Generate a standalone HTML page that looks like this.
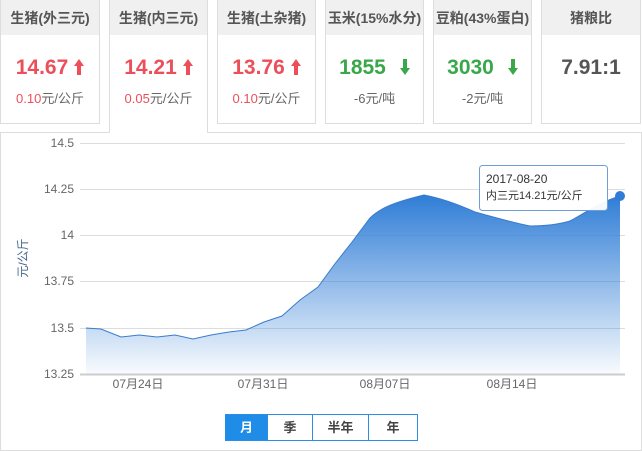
<!DOCTYPE html>
<html><head><meta charset="utf-8"><style>
body{margin:0;width:642px;height:451px;background:#fff;font-family:"Liberation Sans","Noto Sans CJK SC",sans-serif;position:relative;overflow:hidden}
.card{position:absolute;top:0;height:124px;border:1px solid #ddd;border-top:none;box-sizing:border-box;text-align:center;background:#fff}
.card .h{height:35px;background:#f0f0f0;line-height:36px;font-size:14px;font-weight:bold;color:#555}
.card .v{margin-top:18px;font-size:21px;font-weight:bold;height:30px;line-height:30px}
.card .s{font-size:13px;margin-top:5px;color:#666}
.card svg{vertical-align:-1px;margin-left:6px}
.r{color:#ec4f5a}.g{color:#3aa84a}
.active{height:133px;border-bottom:none;z-index:2}
.panel{position:absolute;left:0;top:132px;width:642px;height:319px;border:1px solid #ddd;box-sizing:border-box}
.btns{position:absolute;left:225px;top:414px;display:flex;height:27px;font-size:13px;font-weight:bold;color:#444}
.btns div{border:1px solid #2b8ee4;border-left:none;line-height:25px;text-align:center;box-sizing:border-box}
</style></head><body>
<div class="card" style="left:0;width:100px"><div class="h">生猪(外三元)</div><div class="v r">14.67<svg width="10" height="16" viewBox="0 0 10 16"><path d="M5 0 L10 7 L7 7 L7 16 L3 16 L3 7 L0 7 Z" fill="#ec4f5a"/></svg></div><div class="s"><span class="r">0.10</span>元/公斤</div></div>
<div class="card active" style="left:109px;width:99px"><div class="h">生猪(内三元)</div><div class="v r">14.21<svg width="10" height="16" viewBox="0 0 10 16"><path d="M5 0 L10 7 L7 7 L7 16 L3 16 L3 7 L0 7 Z" fill="#ec4f5a"/></svg></div><div class="s"><span class="r">0.05</span>元/公斤</div></div>
<div class="card" style="left:217px;width:99px"><div class="h">生猪(土杂猪)</div><div class="v r">13.76<svg width="10" height="16" viewBox="0 0 10 16"><path d="M5 0 L10 7 L7 7 L7 16 L3 16 L3 7 L0 7 Z" fill="#ec4f5a"/></svg></div><div class="s"><span class="r">0.10</span>元/公斤</div></div>
<div class="card" style="left:325px;width:99px"><div class="h">玉米(15%水分)</div><div class="v g">1855<svg width="10" height="16" viewBox="0 0 10 16" style="margin-left:14px"><path d="M5 16 L10 9 L7 9 L7 0 L3 0 L3 9 L0 9 Z" fill="#3aa84a"/></svg></div><div class="s">-6元/吨</div></div>
<div class="card" style="left:433px;width:99px"><div class="h">豆粕(43%蛋白)</div><div class="v g">3030<svg width="10" height="16" viewBox="0 0 10 16" style="margin-left:14px"><path d="M5 16 L10 9 L7 9 L7 0 L3 0 L3 9 L0 9 Z" fill="#3aa84a"/></svg></div><div class="s">-2元/吨</div></div>
<div class="card" style="left:541px;width:100px"><div class="h">猪粮比</div><div class="v" style="color:#555">7.91:1</div></div>
<div class="panel"></div>
<svg style="position:absolute;left:0;top:0" width="642" height="451">
<defs><linearGradient id="gr" x1="0" y1="0" x2="0" y2="1"><stop offset="0" stop-color="#2f7dd6"/><stop offset="1" stop-color="#2f7dd6" stop-opacity="0.03"/></linearGradient></defs>
<g stroke="#ddd" stroke-width="1">
<line x1="80" y1="143.5" x2="625" y2="143.5"/><line x1="80" y1="189.5" x2="625" y2="189.5"/><line x1="80" y1="235.5" x2="625" y2="235.5"/><line x1="80" y1="281.5" x2="625" y2="281.5"/><line x1="80" y1="328.5" x2="625" y2="328.5"/></g>
<path d="M86,328 L101,329 L121,337 L139,335 L157,337 L175,335 L193,339 L211,335 L229,332 L246,330 L264,322 L282,316 L300,300 L318,287 L334,265 L352,242 L370,218 C380,208 395,202 424,195 C440,198 455,203 475,212 C490,216 510,222 530,226 C545,226 560,224 570,221 C585,213 600,202 620,196 L620,374 L86,374 Z" fill="url(#gr)" stroke="none"/>
<path d="M86,328 L101,329 L121,337 L139,335 L157,337 L175,335 L193,339 L211,335 L229,332 L246,330 L264,322 L282,316 L300,300 L318,287 L334,265 L352,242 L370,218 C380,208 395,202 424,195 C440,198 455,203 475,212 C490,216 510,222 530,226 C545,226 560,224 570,221 C585,213 600,202 620,196" fill="none" stroke="#3a7ccc" stroke-width="1"/>
<line x1="80" y1="374.5" x2="625" y2="374.5" stroke="#ccc" stroke-width="2"/>
<circle cx="620" cy="196" r="5" fill="#2f7dd6"/>
<rect x="479.5" y="165.5" width="128" height="45" rx="3" fill="#fff" fill-opacity="0.95" stroke="#6e9ed8"/>
<g font-family="Liberation Sans,Noto Sans CJK SC,sans-serif" font-size="12" fill="#666">
<text x="486" y="183" font-size="12" fill="#333">2017-08-20</text>
<text x="486" y="199" fill="#333" font-size="11">内三元14.21元/公斤</text>
<text x="74" y="147" text-anchor="end">14.5</text><text x="74" y="193" text-anchor="end">14.25</text><text x="74" y="239" text-anchor="end">14</text><text x="74" y="285" text-anchor="end">13.75</text><text x="74" y="332" text-anchor="end">13.5</text><text x="74" y="378" text-anchor="end">13.25</text>
<text x="138" y="388" text-anchor="middle">07月24日</text><text x="263" y="388" text-anchor="middle">07月31日</text><text x="385" y="388" text-anchor="middle">08月07日</text><text x="512" y="388" text-anchor="middle">08月14日</text>
<text transform="translate(27,258) rotate(-90)" text-anchor="middle" fill="#46668c" font-size="12">元/公斤</text>
</g></svg>
<div class="btns"><div style="width:43px;background:#1f8ce8;color:#fff;border-left:1px solid #1f8ce8">月</div><div style="width:45px">季</div><div style="width:56px">半年</div><div style="width:49px">年</div></div>
</body></html>
